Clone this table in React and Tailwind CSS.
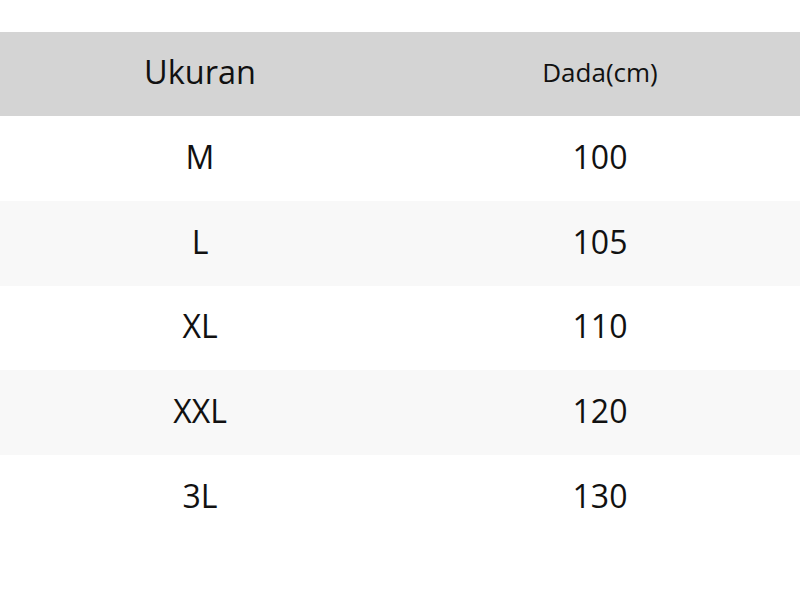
export default function App() {
  const rows = [
    ['M', '100'],
    ['L', '105'],
    ['XL', '110'],
    ['XXL', '120'],
    ['3L', '130'],
  ];
  return (
    <div className="w-[800px] h-[592px] bg-white pt-[32px] text-[#111111]" style={{ fontFamily: '"Open Sans", "Noto Sans", sans-serif' }}>
      <div className="grid grid-cols-2 h-[84px] bg-[#d4d4d4] items-center text-center pb-[4px]">
        <div className="text-[32.5px]">Ukuran</div>
        <div className="text-[26px]">Dada(cm)</div>
      </div>
      {rows.map(([size, chest], i) => (
        <div
          key={size}
          className={`grid grid-cols-2 h-[84.8px] items-center text-center text-[32px] pb-[3px] ${i % 2 === 1 ? 'bg-[#f8f8f8]' : 'bg-white'}`}
        >
          <div>{size}</div>
          <div>{chest}</div>
        </div>
      ))}
    </div>
  );
}
